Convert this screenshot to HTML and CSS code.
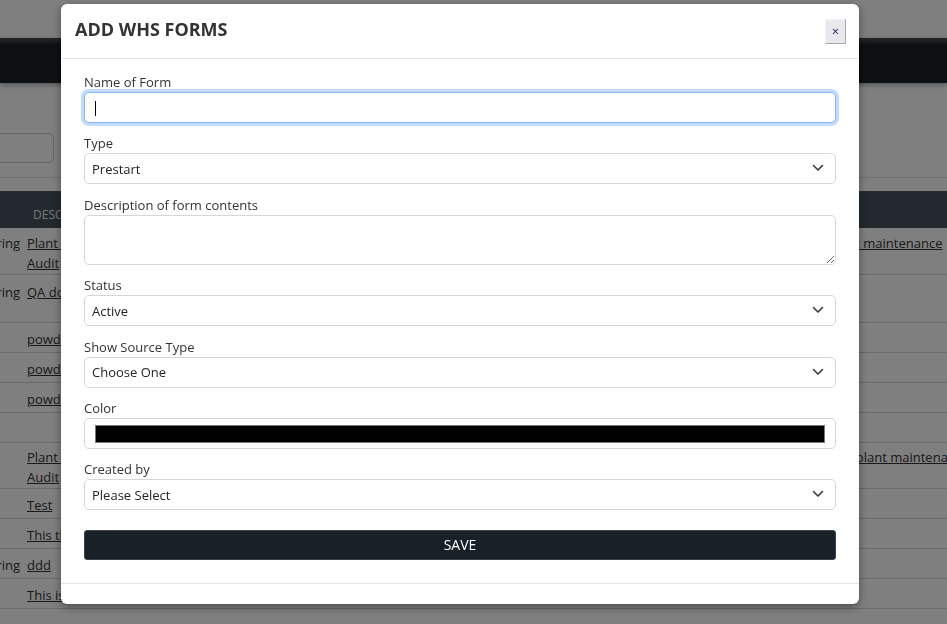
FILE: index.html
```html
<!DOCTYPE html>
<html lang="en">
<head>
    <meta charset="UTF-8">
    <title>Add WHS Forms</title>
    <link rel="stylesheet" href="styles.css">
</head>
<body>
    <div class="page">
        <div class="topbar"></div>
        <nav class="navbar"></nav>
        <div class="toolbar">
            <div class="search"></div>
        </div>

        <div class="grid">
            <div class="grid-head">
                <span></span>
                <span class="c2">Description</span>
                <span></span>
            </div>
            <div class="grid-row h47">
                <span class="c1">Monitoring</span>
                <span class="c2"><a href="#">Plant Checklist<br>Audit</a></span>
                <span class="c3"><a href="#">Plant maintenance </a></span>
            </div>
            <div class="grid-row h48">
                <span class="c1">Monitoring</span>
                <span class="c2"><a href="#">QA documents</a></span>
                <span class="c3"></span>
            </div>
            <div class="grid-row">
                <span class="c1"></span>
                <span class="c2"><a href="#">powder coat</a></span>
                <span class="c3"></span>
            </div>
            <div class="grid-row">
                <span class="c1"></span>
                <span class="c2"><a href="#">powder coat</a></span>
                <span class="c3"></span>
            </div>
            <div class="grid-row">
                <span class="c1"></span>
                <span class="c2"><a href="#">powder coat</a></span>
                <span class="c3"></span>
            </div>
            <div class="grid-row">
                <span class="c1"></span>
                <span class="c2"></span>
                <span class="c3"></span>
            </div>
            <div class="grid-row h46">
                <span class="c1"></span>
                <span class="c2"><a href="#">Plant Checklist<br>Audit</a></span>
                <span class="c3"><a href="#">Our plant maintenance checks</a></span>
            </div>
            <div class="grid-row">
                <span class="c1"></span>
                <span class="c2"><a href="#">Test</a></span>
                <span class="c3"></span>
            </div>
            <div class="grid-row">
                <span class="c1"></span>
                <span class="c2"><a href="#">This the form</a></span>
                <span class="c3"></span>
            </div>
            <div class="grid-row">
                <span class="c1">Monitoring</span>
                <span class="c2"><a href="#">ddd</a></span>
                <span class="c3"></span>
            </div>
            <div class="grid-row">
                <span class="c1"></span>
                <span class="c2"><a href="#">This is a form</a></span>
                <span class="c3"></span>
            </div>
            <div class="grid-row">
                <span class="c1"></span>
                <span class="c2"></span>
                <span class="c3"></span>
            </div>
        </div>
    </div>

    <div class="backdrop"></div>

    <div class="modal">
        <div class="modal-header">
            <h4 class="modal-title">ADD WHS FORMS</h4>
            <button class="close-btn" type="button">&times;</button>
        </div>
        <form class="modal-body">
            <div class="form-group">
                <label>Name of Form</label>
                <div class="field">
                    <input class="form-control focused" type="text">
                    <span class="caret"></span>
                </div>
            </div>
            <div class="form-group">
                <label>Type</label>
                <div class="field">
                    <select class="form-control">
                        <option>Prestart</option>
                    </select>
                    <svg class="chevron" viewBox="0 0 12 12"><path d="M1.5 3.5l4.5 4.5 4.5-4.5" fill="none" stroke="#343a40" stroke-width="1.6" stroke-linecap="round" stroke-linejoin="round"/></svg>
                </div>
            </div>
            <div class="form-group">
                <label>Description of form contents</label>
                <textarea class="form-control area"></textarea>
            </div>
            <div class="form-group">
                <label>Status</label>
                <div class="field">
                    <select class="form-control">
                        <option>Active</option>
                    </select>
                    <svg class="chevron" viewBox="0 0 12 12"><path d="M1.5 3.5l4.5 4.5 4.5-4.5" fill="none" stroke="#343a40" stroke-width="1.6" stroke-linecap="round" stroke-linejoin="round"/></svg>
                </div>
            </div>
            <div class="form-group">
                <label>Show Source Type</label>
                <div class="field">
                    <select class="form-control">
                        <option>Choose One</option>
                    </select>
                    <svg class="chevron" viewBox="0 0 12 12"><path d="M1.5 3.5l4.5 4.5 4.5-4.5" fill="none" stroke="#343a40" stroke-width="1.6" stroke-linecap="round" stroke-linejoin="round"/></svg>
                </div>
            </div>
            <div class="form-group">
                <label>Color</label>
                <div class="form-control color-field">
                    <span class="swatch"></span>
                </div>
            </div>
            <div class="form-group">
                <label>Created by</label>
                <div class="field">
                    <select class="form-control">
                        <option>Please Select</option>
                    </select>
                    <svg class="chevron" viewBox="0 0 12 12"><path d="M1.5 3.5l4.5 4.5 4.5-4.5" fill="none" stroke="#343a40" stroke-width="1.6" stroke-linecap="round" stroke-linejoin="round"/></svg>
                </div>
            </div>
            <button class="save-btn" type="button">SAVE</button>
        </form>
        <div class="modal-footer"></div>
    </div>
</body>
</html>
```

FILE: styles.css
```css
* {
    box-sizing: border-box;
}

body {
    margin: 0;
    background: #fff;
    font-family: 'Open Sans', 'Liberation Sans', sans-serif;
    font-size: 13px;
    color: #333;
    overflow: hidden;
}

/* page behind the dialog */

.topbar {
    height: 38px;
}

.navbar {
    height: 45px;
    background: linear-gradient(#4a4f55 0, #1d2329 7px, #1d2329 100%);
    box-shadow: 0 2px 5px rgba(0,0,0,0.35);
}

.toolbar {
    padding: 50px 0 14px;
    border-bottom: 1px solid #dcdcdc;
    margin-bottom: 13px;
}

.search {
    width: 74px;
    height: 30px;
    margin-left: -20px;
    border: 1px solid #c8c8c8;
    border-radius: 6px;
}

.grid-head,
.grid-row {
    display: grid;
    grid-template-columns: 22px 806px 1fr;
    line-height: 20px;
}

.grid-head {
    height: 37px;
    padding-top: 14px;
    background: #48525e;
    color: #e6eaee;
    font-size: 12px;
    text-transform: uppercase;
}

.grid-head .c2 {
    padding-left: 11px;
}

.grid-row {
    height: 30px;
    padding-top: 6px;
    border-bottom: 1px solid #d4d4d4;
    color: #333;
}

.grid-row.h47 { height: 47px; padding-top: 5px; }
.grid-row.h48 { height: 48px; padding-top: 7px; }
.grid-row.h46 { height: 46px; padding-top: 4px; }

.grid-row a {
    color: #333;
}

.c1 {
    display: flex;
    justify-content: flex-end;
    padding-right: 2px;
    overflow: hidden;
    white-space: nowrap;
}

.c2 {
    padding-left: 5px;
}

.c3 {
    padding-left: 1px;
    white-space: nowrap;
    overflow: hidden;
}

.backdrop {
    position: fixed;
    inset: 0;
    background: rgba(0,0,0,0.5);
}

/* dialog */

.modal {
    position: absolute;
    top: 4px;
    left: 61px;
    width: 798px;
    background: #fff;
    border-radius: 6px;
    box-shadow: 0 3px 9px rgba(0,0,0,0.4);
}

.modal-header {
    height: 55px;
    padding: 0 13px 4px 14px;
    display: flex;
    align-items: center;
    justify-content: space-between;
    border-bottom: 1px solid #e3e3e3;
}

.modal-title {
    margin: 0;
    font-size: 18px;
    font-weight: 700;
    color: #333;
}

.close-btn {
    width: 21px;
    height: 25px;
    margin-top: 4px;
    padding: 0;
    background: #e9e9ed;
    border: 1px solid;
    border-color: #f3f3f5 #a9a9ad #a9a9ad #f3f3f5;
    font-family: 'Open Sans', sans-serif;
    font-size: 13px;
    line-height: 20px;
    color: #1c1c4a;
}

.modal-body {
    padding: 14px 23px 23px;
}

.form-group {
    margin-bottom: 11.33px;
}

.form-group label {
    display: block;
    line-height: 19px;
    color: #333;
}

.field {
    position: relative;
}

.form-control {
    display: block;
    width: 100%;
    height: 31px;
    padding: 0 7px;
    border: 1px solid #d3d6da;
    border-radius: 5px;
    background: #fff;
    font-family: 'Open Sans', sans-serif;
    font-size: 13px;
    color: #212529;
    outline: none;
    appearance: none;
}

.form-control.focused {
    border-color: #86b7fe;
    box-shadow: 0 0 0 3px rgba(13,110,253,0.25);
}

.caret {
    position: absolute;
    left: 11px;
    top: 9px;
    width: 1px;
    height: 15px;
    background: #000;
}

.chevron {
    position: absolute;
    right: 12px;
    top: 9px;
    width: 12px;
    height: 12px;
    pointer-events: none;
}

.form-control.area {
    height: 50.5px;
    padding: 4px 7px;
    resize: vertical;
}

.color-field {
    padding: 6px 10px 5px 10px;
}

.swatch {
    display: block;
    height: 18px;
    background: #000;
    border: 1px solid #777;
}

.save-btn {
    display: block;
    width: 100%;
    height: 30px;
    margin-top: 19.5px;
    background: #182028;
    border: 1px solid #3c4248;
    border-radius: 3px;
    font-family: 'Open Sans', sans-serif;
    font-size: 14px;
    color: #fff;
}

.modal-footer {
    height: 21px;
    border-top: 1px solid #e3e3e3;
}
```
